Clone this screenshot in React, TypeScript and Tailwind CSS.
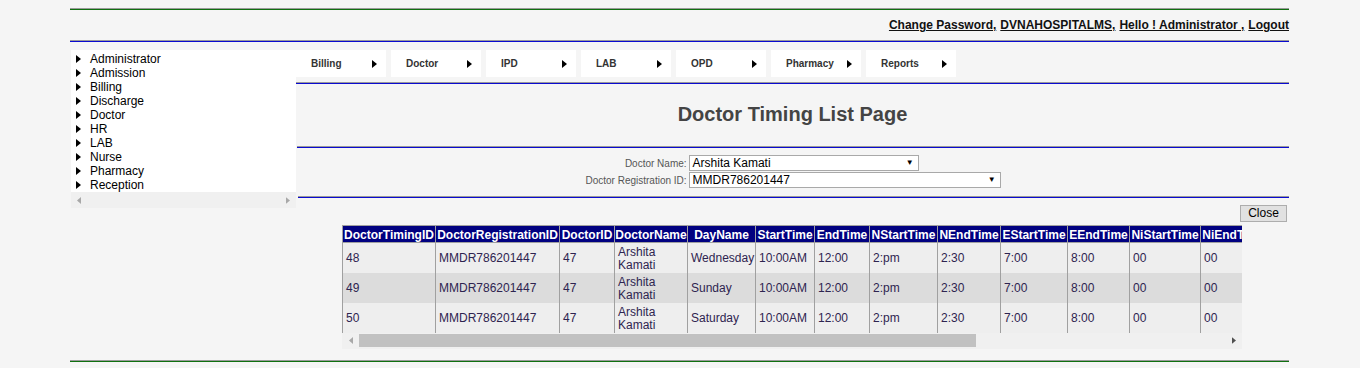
import React from "react";

// Two-tone rule used by the legacy layout: a grey pixel row over a coloured one.
function Rule({ color, className = "" }: { color: "green" | "blue"; className?: string }) {
  return (
    <div
      className={`h-[2px] border-t border-[#9a9a9a] ${
        color === "green" ? "bg-[#107010]" : "bg-[#0a0ad0]"
      } ${className}`}
    />
  );
}

const Tri = ({ className = "" }: { className?: string }) => (
  <svg width="5" height="8" viewBox="0 0 5 8" className={className} aria-hidden>
    <path d="M0 0 L5 4 L0 8 Z" fill="currentColor" />
  </svg>
);

const TriLeft = ({ className = "" }: { className?: string }) => (
  <svg width="4" height="7" viewBox="0 0 4 7" className={className} aria-hidden>
    <path d="M4 0 L0 3.5 L4 7 Z" fill="currentColor" />
  </svg>
);

const sideMenu = [
  "Administrator",
  "Admission",
  "Billing",
  "Discharge",
  "Doctor",
  "HR",
  "LAB",
  "Nurse",
  "Pharmacy",
  "Reception",
];

const topMenu = ["Billing", "Doctor", "IPD", "LAB", "OPD", "Pharmacy", "Reports"];

const columns: [string, number][] = [
  ["DoctorTimingID", 93],
  ["DoctorRegistrationID", 124],
  ["DoctorID", 55],
  ["DoctorName", 73],
  ["DayName", 68],
  ["StartTime", 59],
  ["EndTime", 55],
  ["NStartTime", 68],
  ["NEndTime", 63],
  ["EStartTime", 67],
  ["EEndTime", 62],
  ["NiStartTime", 71],
  ["NiEndTime", 66],
  ["Status", 60],
  ["CreatedBy", 75],
  ["CreatedDate", 140],
  ["Edit", 35],
  ["Delete", 34],
];

const rows = [
  ["48", "MMDR786201447", "47", "Arshita Kamati", "Wednesday", "10:00AM", "12:00", "2:pm", "2:30", "7:00", "8:00", "00", "00", "Active", "Admin", "3/12/2019 10:15:00 AM", "Edit", "Delete"],
  ["49", "MMDR786201447", "47", "Arshita Kamati", "Sunday", "10:00AM", "12:00", "2:pm", "2:30", "7:00", "8:00", "00", "00", "Active", "Admin", "3/12/2019 10:16:00 AM", "Edit", "Delete"],
  ["50", "MMDR786201447", "47", "Arshita Kamati", "Saturday", "10:00AM", "12:00", "2:pm", "2:30", "7:00", "8:00", "00", "00", "Active", "Admin", "3/12/2019 10:17:00 AM", "Edit", "Delete"],
];

export default function App() {
  return (
    <div className="min-h-[368px] bg-[#f5f5f5] pt-2 font-['Liberation_Sans',Arial,sans-serif] text-black">
      <div className="ml-[70px] w-[1219px]">
        <Rule color="green" />

        {/* Account links */}
        <div className="flex h-[30px] items-center justify-end gap-[4px] text-[12px] font-bold text-[#111]">
          <a href="#" className="underline">Change Password,</a>
          <a href="#" className="underline">DVNAHOSPITALMS,</a>
          <a href="#" className="underline">Hello ! Administrator ,</a>
          <a href="#" className="underline">Logout</a>
        </div>

        <Rule color="blue" />

        <div className="mt-2 flex">
          {/* Left tree menu */}
          <div className="ml-px w-[225px] shrink-0">
            <div className="h-[142px] bg-white pt-[2px]">
              {sideMenu.map((m) => (
                <div key={m} className="flex h-[14px] items-center text-[12px] leading-[14px]">
                  <Tri className="ml-[5px] text-black" />
                  <span className="ml-[9px]">{m}</span>
                </div>
              ))}
            </div>
            <div className="flex h-4 items-center justify-between bg-[#f0f0f0] px-[6px] text-[#a8a8a8]">
              <TriLeft />
              <Tri className="h-[7px] w-[4px]" />
            </div>
          </div>

          {/* Main content */}
          <div className="flex-1">
            <div className="flex h-[27px] gap-[5px]">
              {topMenu.map((m) => (
                <div key={m} className="flex w-[90px] items-center bg-white text-[10px] font-bold text-[#333]">
                  <span className="ml-[15px] w-[61px]">{m}</span>
                  <Tri className="text-black" />
                </div>
              ))}
            </div>

            <Rule color="blue" className="mt-[5px]" />

            <div className="flex h-[62px] items-center justify-center pb-[2px] text-[20px] font-bold text-[#444]">
              Doctor Timing List Page
            </div>

            <Rule color="blue" className="ml-px" />

            {/* Filter form */}
            <div className="flex justify-center pt-[7px] pb-2 pl-[1px]">
              <div className="grid grid-cols-[auto_312px] gap-y-px text-[10px] text-[#555]">
                <div className="flex h-4 items-center justify-end whitespace-nowrap pr-[2px]">Doctor Name:</div>
                <div className="relative h-4 w-[230px] border border-[#a9a9a9] bg-white">
                  <span className="absolute left-[3px] top-0 text-[12px] leading-[14px] text-black">Arshita Kamati</span>
                  <span className="absolute right-[4px] top-[3px] text-[8px] leading-[8px] text-black">▼</span>
                </div>
                <div className="flex h-4 items-center justify-end whitespace-nowrap pr-[2px]">Doctor Registration ID:</div>
                <div className="relative h-4 w-[312px] border border-[#a9a9a9] bg-white">
                  <span className="absolute left-[3px] top-0 text-[12px] leading-[14px] text-black">MMDR786201447</span>
                  <span className="absolute right-[4px] top-[3px] text-[8px] leading-[8px] text-black">▼</span>
                </div>
              </div>
            </div>

            <Rule color="blue" className="ml-[2px]" />

            <div className="mt-[7px] flex justify-end pr-[2px]">
              <button className="h-[17px] w-[47px] border border-[#adadad] bg-[#e1e1e1] text-[12px] leading-[15px] text-black">
                Close
              </button>
            </div>

            <div className="ml-[46px] mt-[3px] w-[900px] bg-[#f0f0f0]">
              <div className="overflow-hidden">
                <table className="w-[1268px] table-fixed border-collapse text-[12px]">
                  <colgroup>
                    {columns.map(([c, w]) => (
                      <col key={c} style={{ width: w }} />
                    ))}
                  </colgroup>
                  <thead>
                    <tr className="h-[17px] bg-[#000080] text-white">
                      {columns.map(([c]) => (
                        <th
                          key={c}
                          className="whitespace-nowrap border border-[#a0a0a0] px-0 pt-px pb-0 text-center font-bold leading-[14px]"
                        >
                          {c}
                        </th>
                      ))}
                    </tr>
                  </thead>
                  <tbody>
                    {rows.map((r, i) => (
                      <tr key={r[0]} className={`h-[30px] ${i % 2 ? "bg-[#dcdcdc]" : "bg-[#eeeeee]"}`}>
                        {r.map((v, j) => (
                          <td
                            key={j}
                            className="border-x border-[#a0a0a0] pt-[2px] pb-0 pl-[3px] pr-[2px] align-middle leading-[13px] text-[#2e2450]"
                          >
                            {v}
                          </td>
                        ))}
                      </tr>
                    ))}
                  </tbody>
                </table>
              </div>
              <div className="flex h-4 items-center">
                <div className="flex w-[17px] justify-center text-[#a8a8a8]">
                  <TriLeft />
                </div>
                <div className="h-[13px] w-[617px] bg-[#c1c1c1]" />
                <div className="flex-1" />
                <div className="flex w-[17px] justify-center text-[#505050]">
                  <Tri className="h-[7px] w-[4px]" />
                </div>
              </div>
            </div>
          </div>
        </div>

        <Rule color="green" className="mt-[11px]" />
      </div>
    </div>
  );
}
